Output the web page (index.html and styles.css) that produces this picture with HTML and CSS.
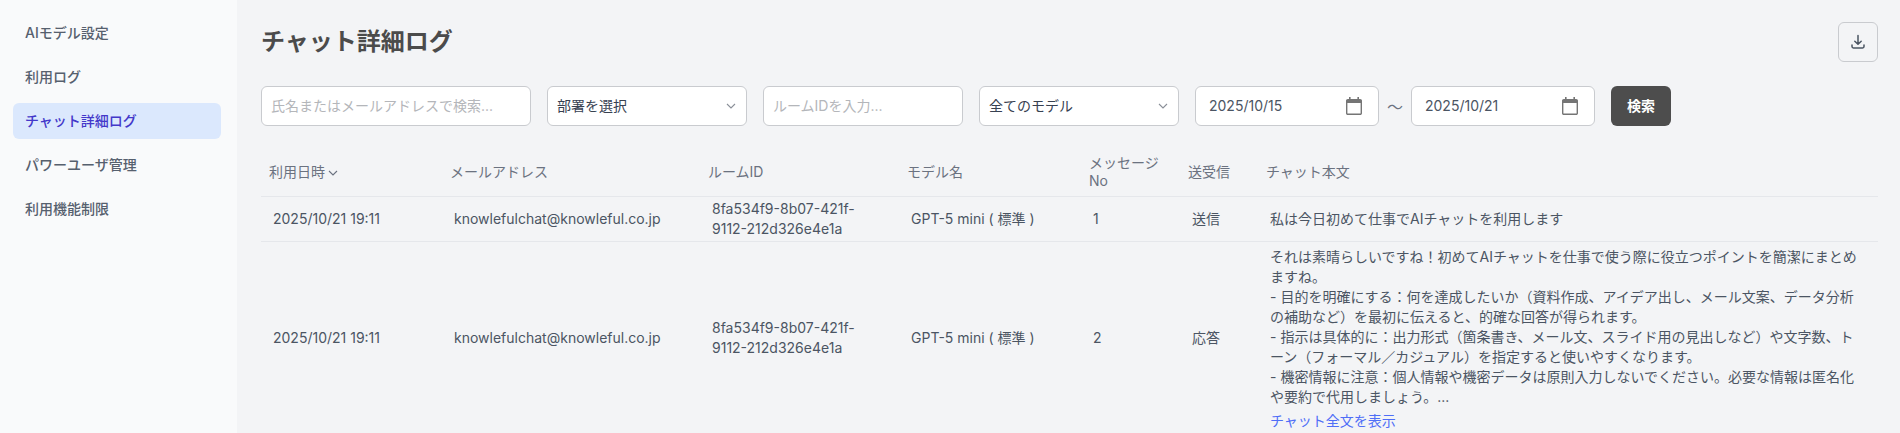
FILE: index.html
```html
<!DOCTYPE html>
<html lang="ja">
<head>
  <meta charset="utf-8" />
  <title>チャット詳細ログ</title>
  <link rel="stylesheet" href="styles.css">
</head>
<body>
  <aside class="sidebar">
    <a class="nav-item" href="#">AIモデル設定</a>
    <a class="nav-item" href="#">利用ログ</a>
    <a class="nav-item active" href="#">チャット詳細ログ</a>
    <a class="nav-item" href="#">パワーユーザ管理</a>
    <a class="nav-item" href="#">利用機能制限</a>
  </aside>

  <main class="content">
    <header class="page-head">
      <h1>チャット詳細ログ</h1>
      <button class="btn-download" aria-label="ダウンロード">
        <svg width="16" height="16" viewBox="0 0 16 16" fill="none" stroke="#4b5563" stroke-width="1.5" stroke-linecap="round" stroke-linejoin="round"><path d="M8 1.5v8.5M4.8 7.2 8 10.3l3.2-3.1"/><path d="M2 11v1.6c0 .8.6 1.4 1.4 1.4h9.2c.8 0 1.4-.6 1.4-1.4V11"/></svg>
      </button>
    </header>

    <section class="filters">
      <input class="field w-name" type="text" placeholder="氏名またはメールアドレスで検索...">
      <div class="field w-select">
        <span>部署を選択</span>
        <svg width="10" height="6" viewBox="0 0 10 6" fill="none" stroke="#8a8f98" stroke-width="1.1"><path d="M1 1l4 4 4-4"/></svg>
      </div>
      <input class="field w-select" type="text" placeholder="ルームIDを入力...">
      <div class="field w-select">
        <span>全てのモデル</span>
        <svg width="10" height="6" viewBox="0 0 10 6" fill="none" stroke="#8a8f98" stroke-width="1.1"><path d="M1 1l4 4 4-4"/></svg>
      </div>
      <div class="date-range">
        <div class="field w-date">
          <span>2025/10/15</span>
          <svg class="cal" width="16" height="18" viewBox="0 0 16 18"><path fill="#757575" d="M3 0h1.6v2H11.4V0H13v2h1.2C15.2 2 16 2.800 16 3.800v12.400c0 1-.8 1.800-1.800 1.800H1.800C.8 18 0 17.200 0 16.200V3.800C0 2.800.8 2 1.800 2H3zM1.400 6v10.200c0 .2.200.4.400.4h12.400c.2 0 .4-.2.400-.4V6z"/></svg>
        </div>
        <span class="tilde">〜</span>
        <div class="field w-date">
          <span>2025/10/21</span>
          <svg class="cal" width="16" height="18" viewBox="0 0 16 18"><path fill="#757575" d="M3 0h1.6v2H11.4V0H13v2h1.2C15.2 2 16 2.800 16 3.800v12.400c0 1-.8 1.800-1.800 1.800H1.800C.8 18 0 17.200 0 16.200V3.800C0 2.800.8 2 1.800 2H3zM1.400 6v10.200c0 .2.200.4.400.4h12.400c.2 0 .4-.2.400-.4V6z"/></svg>
        </div>
      </div>
      <button class="btn-search">検索</button>
    </section>

    <table class="log-table">
      <colgroup>
        <col class="c-date"><col class="c-mail"><col class="c-room"><col class="c-model"><col class="c-no"><col class="c-dir"><col>
      </colgroup>
      <thead>
        <tr>
          <th>利用日時<svg class="sort" width="10" height="6" viewBox="0 0 10 6" fill="none" stroke="#6b7280" stroke-width="1.1"><path d="M1 1l4 4 4-4"/></svg></th>
          <th>メールアドレス</th>
          <th>ルームID</th>
          <th>モデル名</th>
          <th>メッセージNo</th>
          <th>送受信</th>
          <th>チャット本文</th>
        </tr>
      </thead>
      <tbody>
        <tr>
          <td>2025/10/21 19:11</td>
          <td>knowlefulchat@knowleful.co.jp</td>
          <td>8fa534f9-8b07-421f-9112-212d326e4e1a</td>
          <td>GPT-5 mini ( 標準 )</td>
          <td>1</td>
          <td>送信</td>
          <td>私は今日初めて仕事でAIチャットを利用します</td>
        </tr>
        <tr>
          <td>2025/10/21 19:11</td>
          <td>knowlefulchat@knowleful.co.jp</td>
          <td>8fa534f9-8b07-421f-9112-212d326e4e1a</td>
          <td>GPT-5 mini ( 標準 )</td>
          <td>2</td>
          <td>応答</td>
          <td class="chat-body">
            <p>それは素晴らしいですね！初めてAIチャットを仕事で使う際に役立つポイントを簡潔にまとめますね。<br>- 目的を明確にする：何を達成したいか（資料作成、アイデア出し、メール文案、データ分析の補助など）を最初に伝えると、的確な回答が得られます。<br>- 指示は具体的に：出力形式（箇条書き、メール文、スライド用の見出しなど）や文字数、トーン（フォーマル／カジュアル）を指定すると使いやすくなります。<br>- 機密情報に注意：個人情報や機密データは原則入力しないでください。必要な情報は匿名化や要約で代用しましょう。...</p>
            <a class="show-all" href="#">チャット全文を表示</a>
          </td>
        </tr>
      </tbody>
    </table>
  </main>
</body>
</html>
```

FILE: styles.css
```css
:root {
  --text:#4b5563;
  --muted:#6b7280;
  --line:#e5e7eb;
  --field-line:#c9cbcf;
}

*{box-sizing:border-box;margin:0;padding:0}
html,body{height:100%;overflow:hidden}
body{
  font-family:Inter,"Noto Sans CJK JP",sans-serif;
  font-size:14px;color:var(--text);
  background:#f3f4f6;
  display:flex;
}

/* Sidebar */
.sidebar{
  width:237px;flex:none;background:#f9fafb;
  padding:15px 16px 0 13px;
  display:flex;flex-direction:column;gap:8px;
}
.nav-item{
  display:flex;align-items:center;height:36px;padding:0 12px 2px;
  border-radius:6px;color:#56606e;text-decoration:none;font-weight:500;
}
.nav-item.active{background:#dbe8fd;color:#4338ca}

/* Main */
.content{flex:1;min-width:0;padding:22px 22px 0 24px}
.page-head{display:flex;justify-content:space-between;align-items:center;height:40px}
.page-head h1{font-size:24px;font-weight:600;color:#4b4b4b;margin-top:-6px}
.btn-download{
  width:40px;height:40px;display:flex;align-items:center;justify-content:center;
  background:transparent;border:1px solid var(--field-line);border-radius:6px;
}

.filters{display:flex;align-items:center;gap:16px;margin-top:24px}
.field{
  height:40px;display:flex;align-items:center;justify-content:space-between;
  background:#fff;border:1px solid var(--field-line);border-radius:6px;
  padding:0 10px 0 9px;font:inherit;color:#374151;
}
.field span{margin-top:-2px}
input.field{outline:none;padding-bottom:2px}
input.field::placeholder{color:#b4b6ba}
.w-name{width:270px}
.w-select{width:200px}
.w-date{width:184px;padding:0 16px 0 13px;color:var(--text)}
.date-range{display:flex;align-items:center}
.tilde{width:32px;text-align:center;font-size:16px;color:var(--muted)}
.btn-search{
  width:60px;height:40px;border:none;border-radius:6px;padding-bottom:2px;
  background:#4d4d4d;color:#fff;font:inherit;font-weight:700;
}

/* Table */
.log-table{width:100%;border-collapse:collapse;table-layout:fixed;margin-top:22px}
.c-date{width:181px}
.c-mail{width:258px}
.c-room{width:199px}
.c-model{width:182px}
.c-no{width:99px}
.c-dir{width:78px}
th{
  height:48px;padding:0 8px;text-align:left;vertical-align:middle;
  font-weight:400;color:var(--muted);line-height:18px;
  border-bottom:1px solid var(--line);
}
.sort{margin-left:3px;vertical-align:1px}
td{
  padding:2px 12px;line-height:20px;vertical-align:middle;
  border-bottom:1px solid var(--line);
}
.chat-body{padding-top:5px;padding-bottom:3px}
.show-all{display:block;margin-top:4px;color:#4f6ef7;text-decoration:none}
```
